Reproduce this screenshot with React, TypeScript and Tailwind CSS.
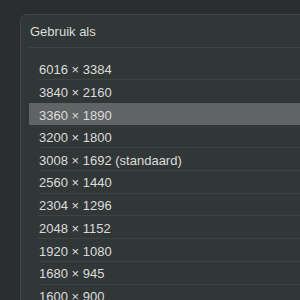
import React from 'react';

const resolutions = [
    '6016 × 3384',
    '3840 × 2160',
    '3360 × 1890',
    '3200 × 1800',
    '3008 × 1692 (standaard)',
    '2560 × 1440',
    '2304 × 1296',
    '2048 × 1152',
    '1920 × 1080',
    '1680 × 945',
    '1600 × 900',
];

const selected = 2;

export default function App() {
    return (
        <div
            className="h-[300px] w-[300px] overflow-hidden bg-[#2a2e2e] pl-[20px] pt-[14px] text-[13px] text-[#dcdddd]"
            style={{ fontFamily: '"Liberation Sans", Arial, sans-serif' }}
        >
            <div className="h-[400px] w-[320px] rounded-tl-[7px] border-l border-t border-[#414545] bg-[#313636] pl-[8px]">
                {/* Header */}
                <div className="flex h-[33px] items-center border-b border-[#3f4343] pl-[1px] pt-[2px]">Gebruik als</div>

                {/* Resolution list */}
                <div className="pt-[9px]">
                    {resolutions.map((r, i) => {
                        const isSel = i === selected;
                        const hideLine = isSel || i === selected - 1;
                        return (
                            <div key={r} className={`h-[22.75px] pl-[9px] ${isSel ? 'bg-[#606464]' : ''}`}>
                                <div
                                    className={`flex h-full items-center pl-[1px] pt-[3px] ${
                                        hideLine ? '' : 'border-b border-[#3d4242]'
                                    }`}
                                >
                                    {r}
                                </div>
                            </div>
                        );
                    })}
                </div>
            </div>
        </div>
    );
}
